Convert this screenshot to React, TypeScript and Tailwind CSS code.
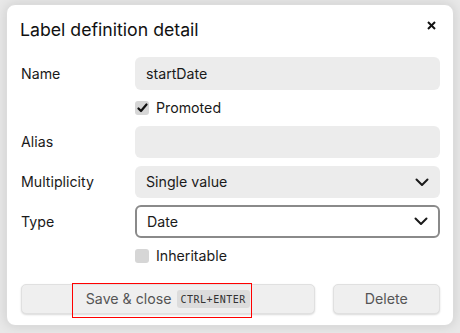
import React from "react";

function Chevron() {
  return (
    <svg width="14" height="9" viewBox="0 0 14 9" fill="none">
      <polyline points="1.5,1.5 7,7 12.5,1.5" stroke="#1a1a1a" strokeWidth="2" strokeLinecap="round" strokeLinejoin="round" />
    </svg>
  );
}

function Checkbox({ checked }: { checked: boolean }) {
  return (
    <div className="w-[14px] h-[14px] rounded-[3px] bg-[#d6d6d6] flex items-center justify-center">
      {checked && (
        <svg width="11" height="10" viewBox="0 0 11 10" fill="none">
          <polyline points="1.5,5.5 4,8 9.5,1.5" stroke="#111" strokeWidth="2.2" strokeLinecap="round" strokeLinejoin="round" />
        </svg>
      )}
    </div>
  );
}

export default function App() {
  return (
    <div
      className="w-[460px] h-[333px] bg-[#e8e8e8] pt-[4px] px-[6px] overflow-hidden"
      style={{ fontFamily: "Inter, 'Noto Sans', sans-serif" }}
    >
      <div className="h-[322px] bg-white rounded-[9px] border border-[#dcdcdc] shadow-[0_0_12px_rgba(0,0,0,0.12)] px-[13px] text-[#1a1a1a]">
        <div className="flex items-start justify-between h-[52px]">
          <div className="pt-[11px] text-[17.7px] leading-[28px] text-[#111]">Label definition detail</div>
          <div className="pt-[16px] pr-[4px]">
            <svg width="9" height="9" viewBox="0 0 9 9">
              <line x1="1" y1="1" x2="8" y2="8" stroke="#111" strokeWidth="2" />
              <line x1="8" y1="1" x2="1" y2="8" stroke="#111" strokeWidth="2" />
            </svg>
          </div>
        </div>

        <div className="grid grid-cols-[115px_1fr] text-[14.2px]">
          <div className="h-[33px] flex items-center pl-[1px]">Name</div>
          <div className="h-[33px] rounded-[6px] bg-[#ececec] flex items-center px-[11px]">startDate</div>

          <div />
          <div className="h-[36px] flex items-center gap-[7px]">
            <Checkbox checked />
            <span>Promoted</span>
          </div>

          <div className="h-[32px] flex items-center pl-[1px]">Alias</div>
          <div className="h-[32px] rounded-[6px] bg-[#ececec]" />

          <div className="h-[8px] col-span-2" />

          <div className="h-[32px] flex items-center pl-[1px]">Multiplicity</div>
          <div className="h-[32px] rounded-[6px] bg-[#ececec] flex items-center justify-between pl-[11px] pr-[11px]">
            <span>Single value</span>
            <Chevron />
          </div>

          <div className="h-[7px] col-span-2" />

          <div className="h-[33px] flex items-center pl-[1px]">Type</div>
          <div className="h-[33px] rounded-[6px] bg-white border-2 border-[#8a8a8a] flex items-center justify-between pl-[10px] pr-[10px]">
            <span>Date</span>
            <Chevron />
          </div>

          <div />
          <div className="h-[36px] flex items-center gap-[7px]">
            <Checkbox checked={false} />
            <span>Inheritable</span>
          </div>
        </div>

        <div className="flex gap-[18px] mt-[10px] pl-[1px]">
          <div className="relative w-[295px]">
            <button className="w-full h-[30px] rounded-[5px] bg-[#efefef] border border-[#e0e0e0] shadow-[0_1px_2px_rgba(0,0,0,0.15)] flex items-center justify-center gap-[5px] text-[14.2px] text-[#555]">
              <span>Save &amp; close</span>
              <span
                className="h-[18px] px-[4px] rounded-[3px] bg-[#dcdcdc] text-[10px] text-[#333] flex items-center tracking-[0.5px]"
                style={{ fontFamily: "'DejaVu Sans Mono', monospace" }}
              >
                CTRL+ENTER
              </span>
            </button>
            <div className="absolute left-[51px] top-[-1px] w-[180px] h-[35px] border border-[#ff0000] pointer-events-none" />
          </div>
          <button className="w-[108px] h-[30px] rounded-[5px] bg-[#efefef] border border-[#e0e0e0] shadow-[0_1px_2px_rgba(0,0,0,0.15)] text-[14.2px] text-[#555]">
            Delete
          </button>
        </div>
      </div>
    </div>
  );
}
